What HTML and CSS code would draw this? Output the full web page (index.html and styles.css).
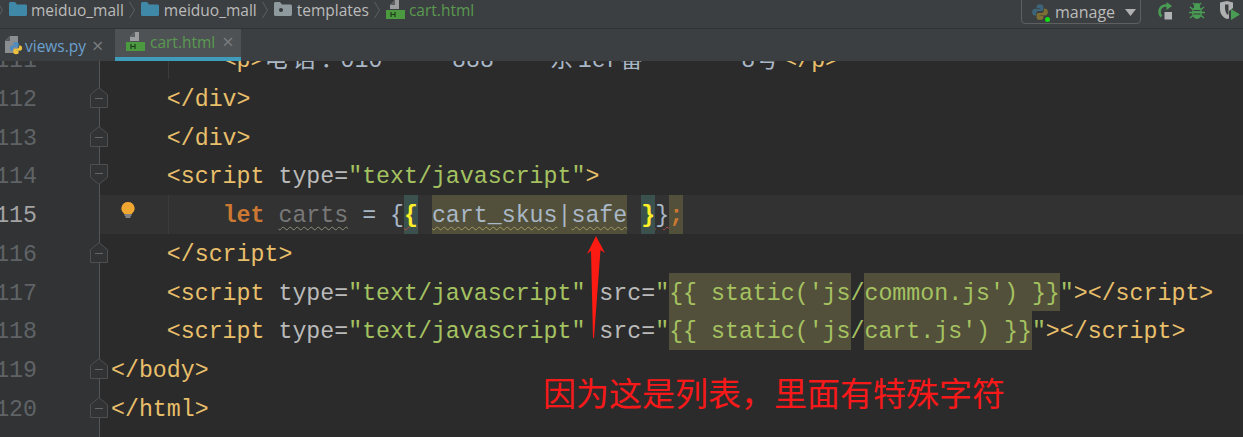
FILE: index.html
```html
<!DOCTYPE html>
<html lang="zh">
<head>
<meta charset="utf-8">
<title>cart.html</title>
<link rel="stylesheet" href="styles.css">
</head>
<body>
<svg width="0" height="0" class="defs">
  <defs>
    <symbol id="folder" viewBox="0 0 18 14"><path d="M0 1.500C0 .7.700 0 1.500 0H6l2 2.500h8.500c.8 0 1.500.7 1.500 1.500v8.500c0 .8-.7 1.500-1.500 1.500h-15C.7 14 0 13.300 0 12.500Z" fill="#3f88a8"/></symbol>
    <symbol id="html" viewBox="0 0 19 19"><path d="M9 0h4v9H4V5Z" fill="#9a9c9d"/><path d="M9 0v5H4Z" fill="#5c5f61"/><rect y="10" width="19" height="9" fill="#4c9a3f"/><path d="M5 12v5M9 12v5M5 14.500h4" stroke="#1e3a1c" stroke-width="1.200" fill="none"/></symbol>
    <symbol id="hand-top" viewBox="0 0 16 16"><path d="M8 1C5.500 1 5 2 5 3v1.500h3.200V5H3.500C2 5 1 6 1 8s1 3 2.200 3h1.300V9.300c0-1.300 1-2.100 2.200-2.100h2.800c1 0 1.500-.7 1.500-1.700V3c0-1-1-2-3-2Z"/></symbol>
    <symbol id="fold-end" viewBox="0 0 18 21"><path d="M.5 7.500 9 .7l8.500 6.800v13h-17Z" fill="#313335" stroke="#4f4f4f"/><path d="M5 11.500h8" stroke="#666"/></symbol>
    <symbol id="fold-start" viewBox="0 0 18 21"><path d="M.5 13.500 9 20.300l8.500-6.800V.5h-17Z" fill="#313335" stroke="#4f4f4f"/><path d="M5 9.500h8" stroke="#666"/></symbol>
  </defs>
</svg>

<header class="nav">
  <svg class="crumb-sep first" width="6" height="18"><path d="M.5 1 5.500 9 .5 17" stroke="#5c5f61" fill="none"/></svg>
  <svg class="crumb-icon" width="18" height="14"><use href="#folder"/></svg>
  <span class="crumb">meiduo_mall</span>
  <svg class="crumb-sep" width="6" height="18"><path d="M.5 1 5.500 9 .5 17" stroke="#5c5f61" fill="none"/></svg>
  <svg class="crumb-icon" width="18" height="14"><use href="#folder"/></svg>
  <span class="crumb">meiduo_mall</span>
  <svg class="crumb-sep" width="6" height="18"><path d="M.5 1 5.500 9 .5 17" stroke="#5c5f61" fill="none"/></svg>
  <svg class="crumb-icon" width="18" height="14" viewBox="0 0 18 14"><path d="M0 1.500C0 .7.700 0 1.500 0H6l2 2.500h8.500c.8 0 1.500.7 1.500 1.500v8.500c0 .8-.7 1.500-1.500 1.500h-15C.7 14 0 13.300 0 12.500Z" fill="#8f9a9f"/><circle cx="7" cy="8" r="2" fill="#33383a"/></svg>
  <span class="crumb">templates</span>
  <svg class="crumb-sep" width="6" height="18"><path d="M.5 1 5.500 9 .5 17" stroke="#5c5f61" fill="none"/></svg>
  <svg class="crumb-file" width="19" height="19"><use href="#html"/></svg>
  <span class="crumb green">cart.html</span>

  <div class="tools">
    <div class="combo">
      <span class="combo-icon">
        <svg width="18" height="18" viewBox="0 0 16 16"><use href="#hand-top" fill="#3d6478"/><use href="#hand-top" fill="#7d6f33" transform="rotate(180 8 8)"/></svg>
        <span class="status-dot"></span>
      </span>
      <span class="combo-label">manage</span>
      <svg width="11" height="7"><path d="M0 0h11L5.500 7Z" fill="#afb1b3"/></svg>
    </div>
    <svg class="tool rerun" width="16" height="19" viewBox="0 0 16 19"><path d="M11 3.500H8a6 6 0 0 0-5.500 6.500 6 6 0 0 0 2 4.500" fill="none" stroke="#499c54" stroke-width="2.600"/><path d="M9.500 0 15 4 9.500 8Z" fill="#499c54"/><rect x="7.500" y="10" width="7.500" height="7.500" fill="#b0b2b3"/></svg>
    <svg class="tool bug" width="16" height="18" viewBox="0 0 16 18"><ellipse cx="8" cy="10.500" rx="5" ry="6.500" fill="#499c54"/><circle cx="8" cy="4" r="3" fill="#499c54"/><path d="M1 5l3 2.500M15 5l-3 2.500M0 10.500h4M16 10.500h-4M1 16l3-2.500M15 16l-3-2.500M4 1l2 2M12 1l-2 2" stroke="#499c54" stroke-width="1.500"/><path d="M4.500 8.500h7M4.500 12h7" stroke="#3c3f41"/></svg>
    <svg class="tool cover" width="20" height="21" viewBox="0 0 20 21"><path d="M0 1.500 7 0l6 1.500V7L9 10v7.500L7 18C2 16 0 12 0 8Z" fill="#aeb0b1"/><path d="M5 3.500h3.500v10H7C5.500 11 5 9 5 7Z" fill="#3c3f41"/><path d="M11 8l9 5.500-9 5.500Z" fill="#499c54"/></svg>
  </div>
</header>

<nav class="tabs">
  <div class="tab">
    <span class="py-icon">
      <svg class="py-file" width="13" height="17" viewBox="0 0 13 17"><path d="M5 0h8v17H0V5Z" fill="#8b8d8f"/><path d="M5 0v5H0Z" fill="#55585a"/></svg>
      <svg class="py-snake" width="14" height="14" viewBox="0 0 16 16"><use href="#hand-top" fill="#4b8cc2"/><use href="#hand-top" fill="#eec13d" transform="rotate(180 8 8)"/></svg>
    </span>
    <span class="tab-label blue">views.py</span>
    <span class="close">&times;</span>
  </div>
  <div class="tab active">
    <svg width="19" height="19"><use href="#html"/></svg>
    <span class="tab-label green">cart.html</span>
    <span class="close">&times;</span>
  </div>
</nav>

<main class="editor">
  <div class="rows">
    <div class="row"><div class="gut"><span class="num">111</span></div><div class="code"><span class="guide"></span>        <span class="t">&lt;p&gt;</span><span class="cjk">电</span><span class="cjk">话</span><span class="cjk colon">：</span>010     888    <span class="cjk">东</span>1er<span class="cjk narrow">番</span>       8<span class="cjk">号</span><span class="t">&lt;/p&gt;</span></div></div>
    <div class="row"><div class="gut"><span class="num">112</span><svg class="fold" width="18" height="21"><use href="#fold-end"/></svg></div><div class="code">    <span class="t">&lt;/div&gt;</span></div></div>
    <div class="row"><div class="gut"><span class="num">113</span><svg class="fold" width="18" height="21"><use href="#fold-end"/></svg></div><div class="code">    <span class="t">&lt;/div&gt;</span></div></div>
    <div class="row"><div class="gut"><span class="num">114</span><svg class="fold" width="18" height="21"><use href="#fold-start"/></svg></div><div class="code">    <span class="t">&lt;script</span> <span class="a">type=</span><span class="s">"text/javascript"</span><span class="t">&gt;</span></div></div>
    <div class="row current"><div class="gut"><span class="num">115</span></div><div class="code"><span class="guide"></span><svg class="bulb" width="14" height="17" viewBox="0 0 14 17"><path d="M7 0a6.500 6.500 0 0 0-4 11.700V12h8v-.3A6.500 6.500 0 0 0 7 0Z" fill="#f0a732"/><path d="M3.500 13h7M4.500 15h5" stroke="#9a9c9d" stroke-width="1.300"/></svg>        <span class="k">let</span> <span class="grey wave-grey">carts</span><span class="w"> = {</span><span class="brace"><b class="wave-red">{</b></span> <span class="hl w"><span class="wave-olive">cart_skus</span>|<span class="wave-olive">safe</span></span> <span class="brace"><b>}</b></span><span class="w wave-red">}</span><span class="hl k">;</span></div></div>
    <div class="row"><div class="gut"><span class="num">116</span><svg class="fold" width="18" height="21"><use href="#fold-end"/></svg></div><div class="code">    <span class="t">&lt;/script&gt;</span></div></div>
    <div class="row"><div class="gut"><span class="num">117</span></div><div class="code">    <span class="t">&lt;script</span> <span class="a">type=</span><span class="s">"text/javascript"</span> <span class="a">src=</span><span class="s">"<span class="hl">{{ static('js</span>/<span class="hl">common.js') }}</span>"</span><span class="t">&gt;&lt;/script&gt;</span></div></div>
    <div class="row"><div class="gut"><span class="num">118</span></div><div class="code">    <span class="t">&lt;script</span> <span class="a">type=</span><span class="s">"text/javascript"</span> <span class="a">src=</span><span class="s">"<span class="hl">{{ static('js</span>/<span class="hl">cart.js') }}</span>"</span><span class="t">&gt;&lt;/script&gt;</span></div></div>
    <div class="row"><div class="gut"><span class="num">119</span><svg class="fold" width="18" height="21"><use href="#fold-end"/></svg></div><div class="code"><span class="t">&lt;/body&gt;</span></div></div>
    <div class="row"><div class="gut"><span class="num">120</span><svg class="fold" width="18" height="21"><use href="#fold-end"/></svg></div><div class="code"><span class="t">&lt;/html&gt;</span></div></div>
    <div class="row"><div class="gut"></div><div class="code"></div></div>
  </div>
</main>

<svg class="arrow" width="20" height="104" viewBox="0 0 20 104"><path d="M9 0 18 17 13.500 14 7 102 6 102 4 15 0 18Z" fill="#fb1b12"/></svg>
<p class="note">因为这是列表，里面有特殊字符</p>
</body>
</html>
```
FILE: styles.css
```css
* { box-sizing: border-box; }
html, body { margin: 0; padding: 0; }
body {
  position: relative;
  width: 1243px;
  height: 437px;
  overflow: hidden;
  background: #2b2b2b;
  font-family: "Open Sans", "Noto Sans", sans-serif;
}
.defs { position: absolute; }

/* navigation bar */
.nav {
  display: flex;
  align-items: flex-start;
  height: 29px;
  background: #3c3f41;
  border-bottom: 1px solid #323232;
  color: #bbbbbb;
  font-size: 15.500px;
  line-height: 20px;
}
.crumb-sep { flex: none; margin: 1px 6px 0 5px; }
.crumb-sep.first { margin: 1px 6px 0 -3px; }
.crumb-icon { flex: none; margin: 2px 5px 0 0; }
.crumb-sep.first + .crumb-icon { margin-right: 4px; }
.crumb-file { flex: none; margin: 0 4px 0 0; }
.crumb { white-space: nowrap; }
.green { color: #5a9a50; }
.blue { color: #6a9fd0; }

.tools { display: flex; align-items: flex-start; margin-left: auto; font-size: 16px; }
.combo {
  display: flex;
  align-items: center;
  width: 120px;
  height: 30px;
  margin-top: -6px;
  padding: 6px 0 0 9px;
  border: 1px solid #5e6060;
  border-radius: 4px;
}
.combo-icon { position: relative; display: flex; width: 18px; height: 18px; margin-right: 6px; }
.status-dot {
  position: absolute;
  right: -1px;
  bottom: -1px;
  width: 5px;
  height: 5px;
  border-radius: 50%;
  background: #12e012;
}
.combo-label { margin-right: 10px; }
.tool { flex: none; }
.rerun { margin: 2px 0 0 16px; }
.bug { margin: 2px 0 0 16px; }
.cover { margin: 1px 3px 0 15px; }

/* tab bar */
.tabs {
  display: flex;
  height: 32px;
  background: #3c3f41;
  font-size: 15.500px;
}
.tab {
  display: flex;
  align-items: center;
  width: 115px;
  padding: 1px 0 0 4px;
  background: #3c3f41;
}
.tab.active {
  width: 126px;
  padding: 0 0 3px 11px;
  background: #4e5254;
  border-bottom: 4px solid #3f9dbb;
}
.py-icon { position: relative; width: 18px; height: 19px; }
.py-file { position: absolute; left: 1px; top: 0; }
.py-snake { position: absolute; right: -1px; bottom: 0; }
.tab-label { margin-left: 5px; white-space: nowrap; }
.py-icon + .tab-label { margin-left: 3px; }
.close { margin-left: 6px; color: #7a7d7f; font-size: 20px; line-height: 20px; }
.active .close { margin-left: 7px; }

/* editor */
.editor { height: 376px; overflow: hidden; }
.rows { margin-top: -21px; }
.row {
  display: flex;
  height: 38.750px;
  font-family: "Liberation Mono", "Noto Sans CJK SC", monospace;
  font-size: 23.250px;
  line-height: 42.750px;
  white-space: pre;
}
.row.current { background: #323232; }
.gut {
  position: relative;
  flex: none;
  width: 100px;
  background: #313335;
  border-right: 1px solid #555555;
}
.num { display: block; width: 47px; margin-left: -10px; text-align: right; color: #606366; }
.current .num { color: #a4a3a3; }
.fold { position: absolute; left: 90px; top: 8px; z-index: 1; }
.code { position: relative; flex: 1; padding-left: 11px; color: #a9b7c6; }
.guide { position: absolute; left: 68px; top: 0; bottom: 0; width: 1px; background: #3b3b3b; }
.bulb { position: absolute; left: 21px; top: 7px; }

.t { color: #e8bf6a; }
.a { color: #bababa; }
.s { color: #a5c261; }
.k { color: #cc7832; font-weight: bold; }
.w { color: #a9b7c6; }
.grey { color: #787878; }
.cjk { display: inline-block; width: 28px; height: 38.750px; color: #a9b7c6; }
.cjk.colon { width: 20px; }
.cjk.narrow { width: 24px; }
.hl { display: inline-block; height: 38.750px; background: #52503a; }
.brace { display: inline-block; height: 38.750px; background: #3b514d; color: #ffef28; }
.wave-grey { text-decoration: underline wavy #8c8c7a 1px; text-underline-offset: 4px; }
.wave-olive { text-decoration: underline wavy #a09a5c 1px; text-underline-offset: 4px; }
.wave-red { text-decoration: underline wavy #b04a45 1px; text-underline-offset: 4px; }

/* annotations */
.arrow { position: absolute; left: 587px; top: 236px; }
.note {
  position: absolute;
  left: 543px;
  top: 369px;
  margin: 0;
  font-family: "Noto Sans CJK SC", sans-serif;
  font-size: 33px;
  line-height: 46px;
  color: #f7191a;
  white-space: nowrap;
}
```
